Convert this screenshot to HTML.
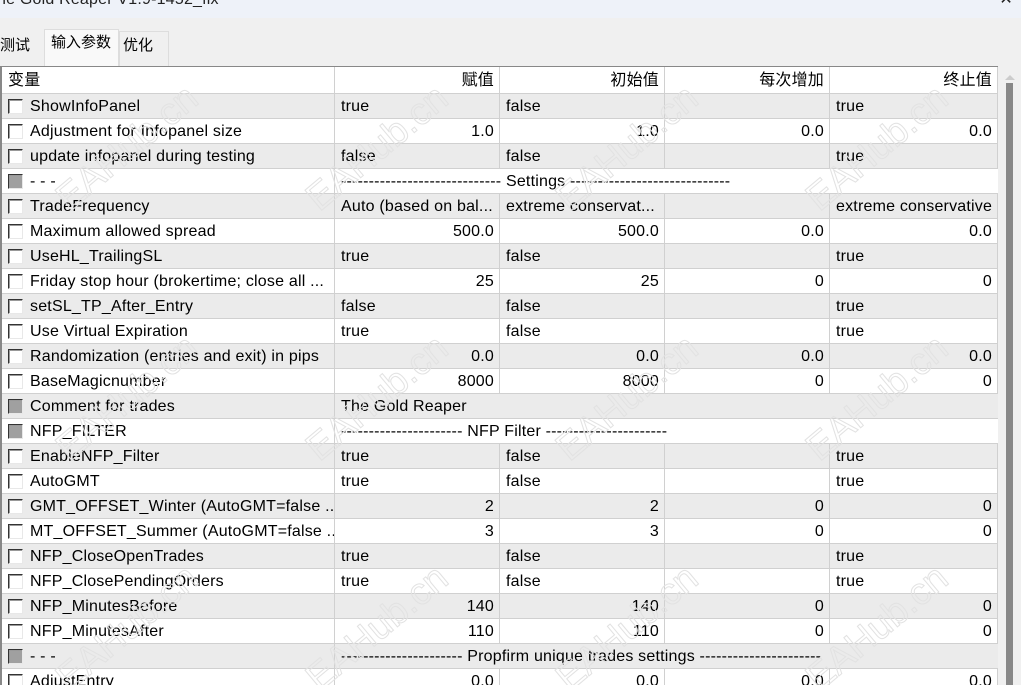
<!DOCTYPE html><html><head><meta charset="utf-8"><style>
*{margin:0;padding:0;box-sizing:border-box}
html,body{overflow:hidden}
body{width:1021px;height:685px;background:#f0f0f0;font-family:"Liberation Sans","Noto Sans CJK SC",sans-serif;font-size:16px;letter-spacing:0.2px;color:#000;position:relative}
.title{position:absolute;left:0;top:0;width:1021px;height:18px;background:#eef2f9;font-size:16px;color:#222;overflow:hidden}
.tabs{position:absolute;top:18px;left:0;width:1021px;height:48px;background:#f0f0f0}
.tab{position:absolute;font-size:15px;letter-spacing:0}
.grid{position:absolute;left:0;top:66px;width:998px;height:619px;background:#fff;border-top:1px solid #888;border-left:2px solid #888;overflow:hidden}
.row{position:absolute;left:0;width:996px;height:25px;border-bottom:1px solid #d0d0d0}
.row.g{background:#ebebeb}
.c{position:absolute;top:0;height:25px;line-height:26px;white-space:nowrap;overflow:hidden;border-right:1px solid #d0d0d0}
.r{text-align:right;padding-right:5px}.l{padding-left:6px}
.cb{position:absolute;left:6px;top:5px;width:15px;height:15px;border:1px solid #e8e8e8;border-top-color:#333;border-left-color:#333;background:#fff;box-shadow:inset 1px 1px 0 #999}
.cb.d{background:#a0a0a0}
.sb{position:absolute;left:998px;top:66px;width:23px;height:619px;background:#f0f0f0;overflow:hidden}
.th{position:absolute;left:8px;top:17px;width:7px;height:602px;background:#888}
.wm{position:absolute;font-size:38px;color:transparent;-webkit-text-stroke:1px #e2e2e2;transform:rotate(-40deg);font-family:"Liberation Sans",sans-serif;white-space:nowrap;letter-spacing:0}
</style></head><body>
<div class="title"><span style="position:absolute;top:-10px;left:-3px;line-height:20px">he Gold Reaper V1.9-1452_fix</span><span style="position:absolute;right:8px;top:-10px;line-height:20px">✕</span></div>
<div class="tabs">
<div style="position:absolute;left:44px;top:11px;width:75px;height:37px;background:#f9f9f9;border:1px solid #ddd;border-bottom:none"></div>
<div style="position:absolute;left:119px;top:13px;width:50px;height:35px;border:1px solid #ddd;border-bottom:none"></div>
<div class="tab" style="left:0;top:16px">测试</div>
<div class="tab" style="left:51px;top:13px">输入参数</div>
<div class="tab" style="left:123px;top:16px">优化</div>
</div>
<div class="grid" id="g"></div>
<div class="sb"><div style="position:absolute;left:7px;top:9px;width:0;height:0;border:5px solid transparent;border-bottom-color:#ccc;border-top:0"></div><div class="th"></div></div>
<script>
const cols=[[0,333],[333,165],[498,165],[663,165],[828,168]];
const R=[
["ShowInfoPanel","true|false||true"],
["Adjustment for Infopanel size","#1.0|#1.0|#0.0|#0.0"],
["update infopanel during testing","false|false||true"],
["- - -","S----------------------------- Settings -----------------------------",1],
["TradeFrequency","Auto (based on bal...|extreme conservat...||extreme conservative"],
["Maximum allowed spread","#500.0|#500.0|#0.0|#0.0"],
["UseHL_TrailingSL","true|false||true"],
["Friday stop hour (brokertime; close all ...","#25|#25|#0|#0"],
["setSL_TP_After_Entry","false|false||true"],
["Use Virtual Expiration","true|false||true"],
["Randomization (entries and exit) in pips","#0.0|#0.0|#0.0|#0.0"],
["BaseMagicnumber","#8000|#8000|#0|#0"],
["Comment for trades","TThe Gold Reaper",1],
["NFP_FILTER","S---------------------- NFP Filter ----------------------",1],
["EnableNFP_Filter","true|false||true"],
["AutoGMT","true|false||true"],
["GMT_OFFSET_Winter (AutoGMT=false ...","#2|#2|#0|#0"],
["MT_OFFSET_Summer (AutoGMT=false ...","#3|#3|#0|#0"],
["NFP_CloseOpenTrades","true|false||true"],
["NFP_ClosePendingOrders","true|false||true"],
["NFP_MinutesBefore","#140|#140|#0|#0"],
["NFP_MinutesAfter","#110|#110|#0|#0"],
["- - -","S---------------------- Propfirm unique trades settings ----------------------",1],
["AdjustEntry","#0.0|#0.0|#0.0|#0.0"]];
let h='<div class="row" style="top:0;height:27px;background:#fff"><div class="c l" style="left:0;width:333px;line-height:28px;height:27px">变量</div>'+
['赋值','初始值','每次增加','终止值'].map((t,i)=>`<div class="c r" style="left:${cols[i+1][0]}px;width:${cols[i+1][1]}px;line-height:28px;height:27px">${t}</div>`).join('')+'</div>';
R.forEach((r,i)=>{let top=27+i*25;h+=`<div class="row${i%2==0?' g':''}" style="top:${top}px"><div class="c" style="left:0;width:333px;padding-left:28px"><span class="cb${r[2]?' d':''}"></span>${r[0]}</div>`;
let v=r[1];
if(v[0]=='S'){h+=`<div class="c" style="left:333px;width:663px;padding-left:6px;border-right:none">${v.slice(1)}</div>`}
else if(v[0]=='T'){h+=`<div class="c l" style="left:333px;width:663px;border-right:none">${v.slice(1)}</div>`}
else v.split('|').forEach((x,j)=>{let num=x[0]=='#';h+=`<div class="c ${num?'r':'l'}" style="left:${cols[j+1][0]}px;width:${cols[j+1][1]}px">${num?x.slice(1):x}</div>`});
h+='</div>'});
const wm=[[90,60],[340,60],[590,60],[840,60],[90,310],[340,310],[590,310],[840,310],[90,540],[340,540],[590,540],[840,540]];
wm.forEach(p=>h+=`<div class="wm" style="left:${p[0]-50}px;top:${p[1]}px">EAHub.cn</div>`);
document.getElementById('g').innerHTML=h;
</script>
</body></html>
